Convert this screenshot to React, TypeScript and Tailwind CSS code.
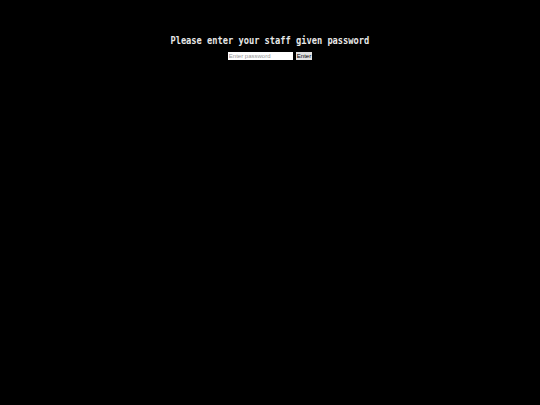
import React from 'react';

export default function App() {
  return (
    <div className="w-[540px] h-[405px] bg-black flex flex-col items-center pt-[34px]">
      <h1 className="text-[11px] leading-[14px] font-bold text-[#e8e8e8] font-['DejaVu_Sans_Mono',monospace] scale-x-[0.79] whitespace-nowrap">
        Please enter your staff given password
      </h1>
      <div className="flex items-center gap-[3px] mt-[4px]">
        <input
          type="password"
          placeholder="Enter password"
          className="w-[65px] h-[8px] bg-white text-[6px] leading-[8px] px-[1px] text-black placeholder:text-[#999] font-['Liberation_Sans',sans-serif] outline-none border-0"
        />
        <button className="h-[8px] px-[1px] bg-[#e0e0e0] text-black text-[6px] leading-[8px] font-['Liberation_Sans',sans-serif] border-0">
          Enter
        </button>
      </div>
    </div>
  );
}
